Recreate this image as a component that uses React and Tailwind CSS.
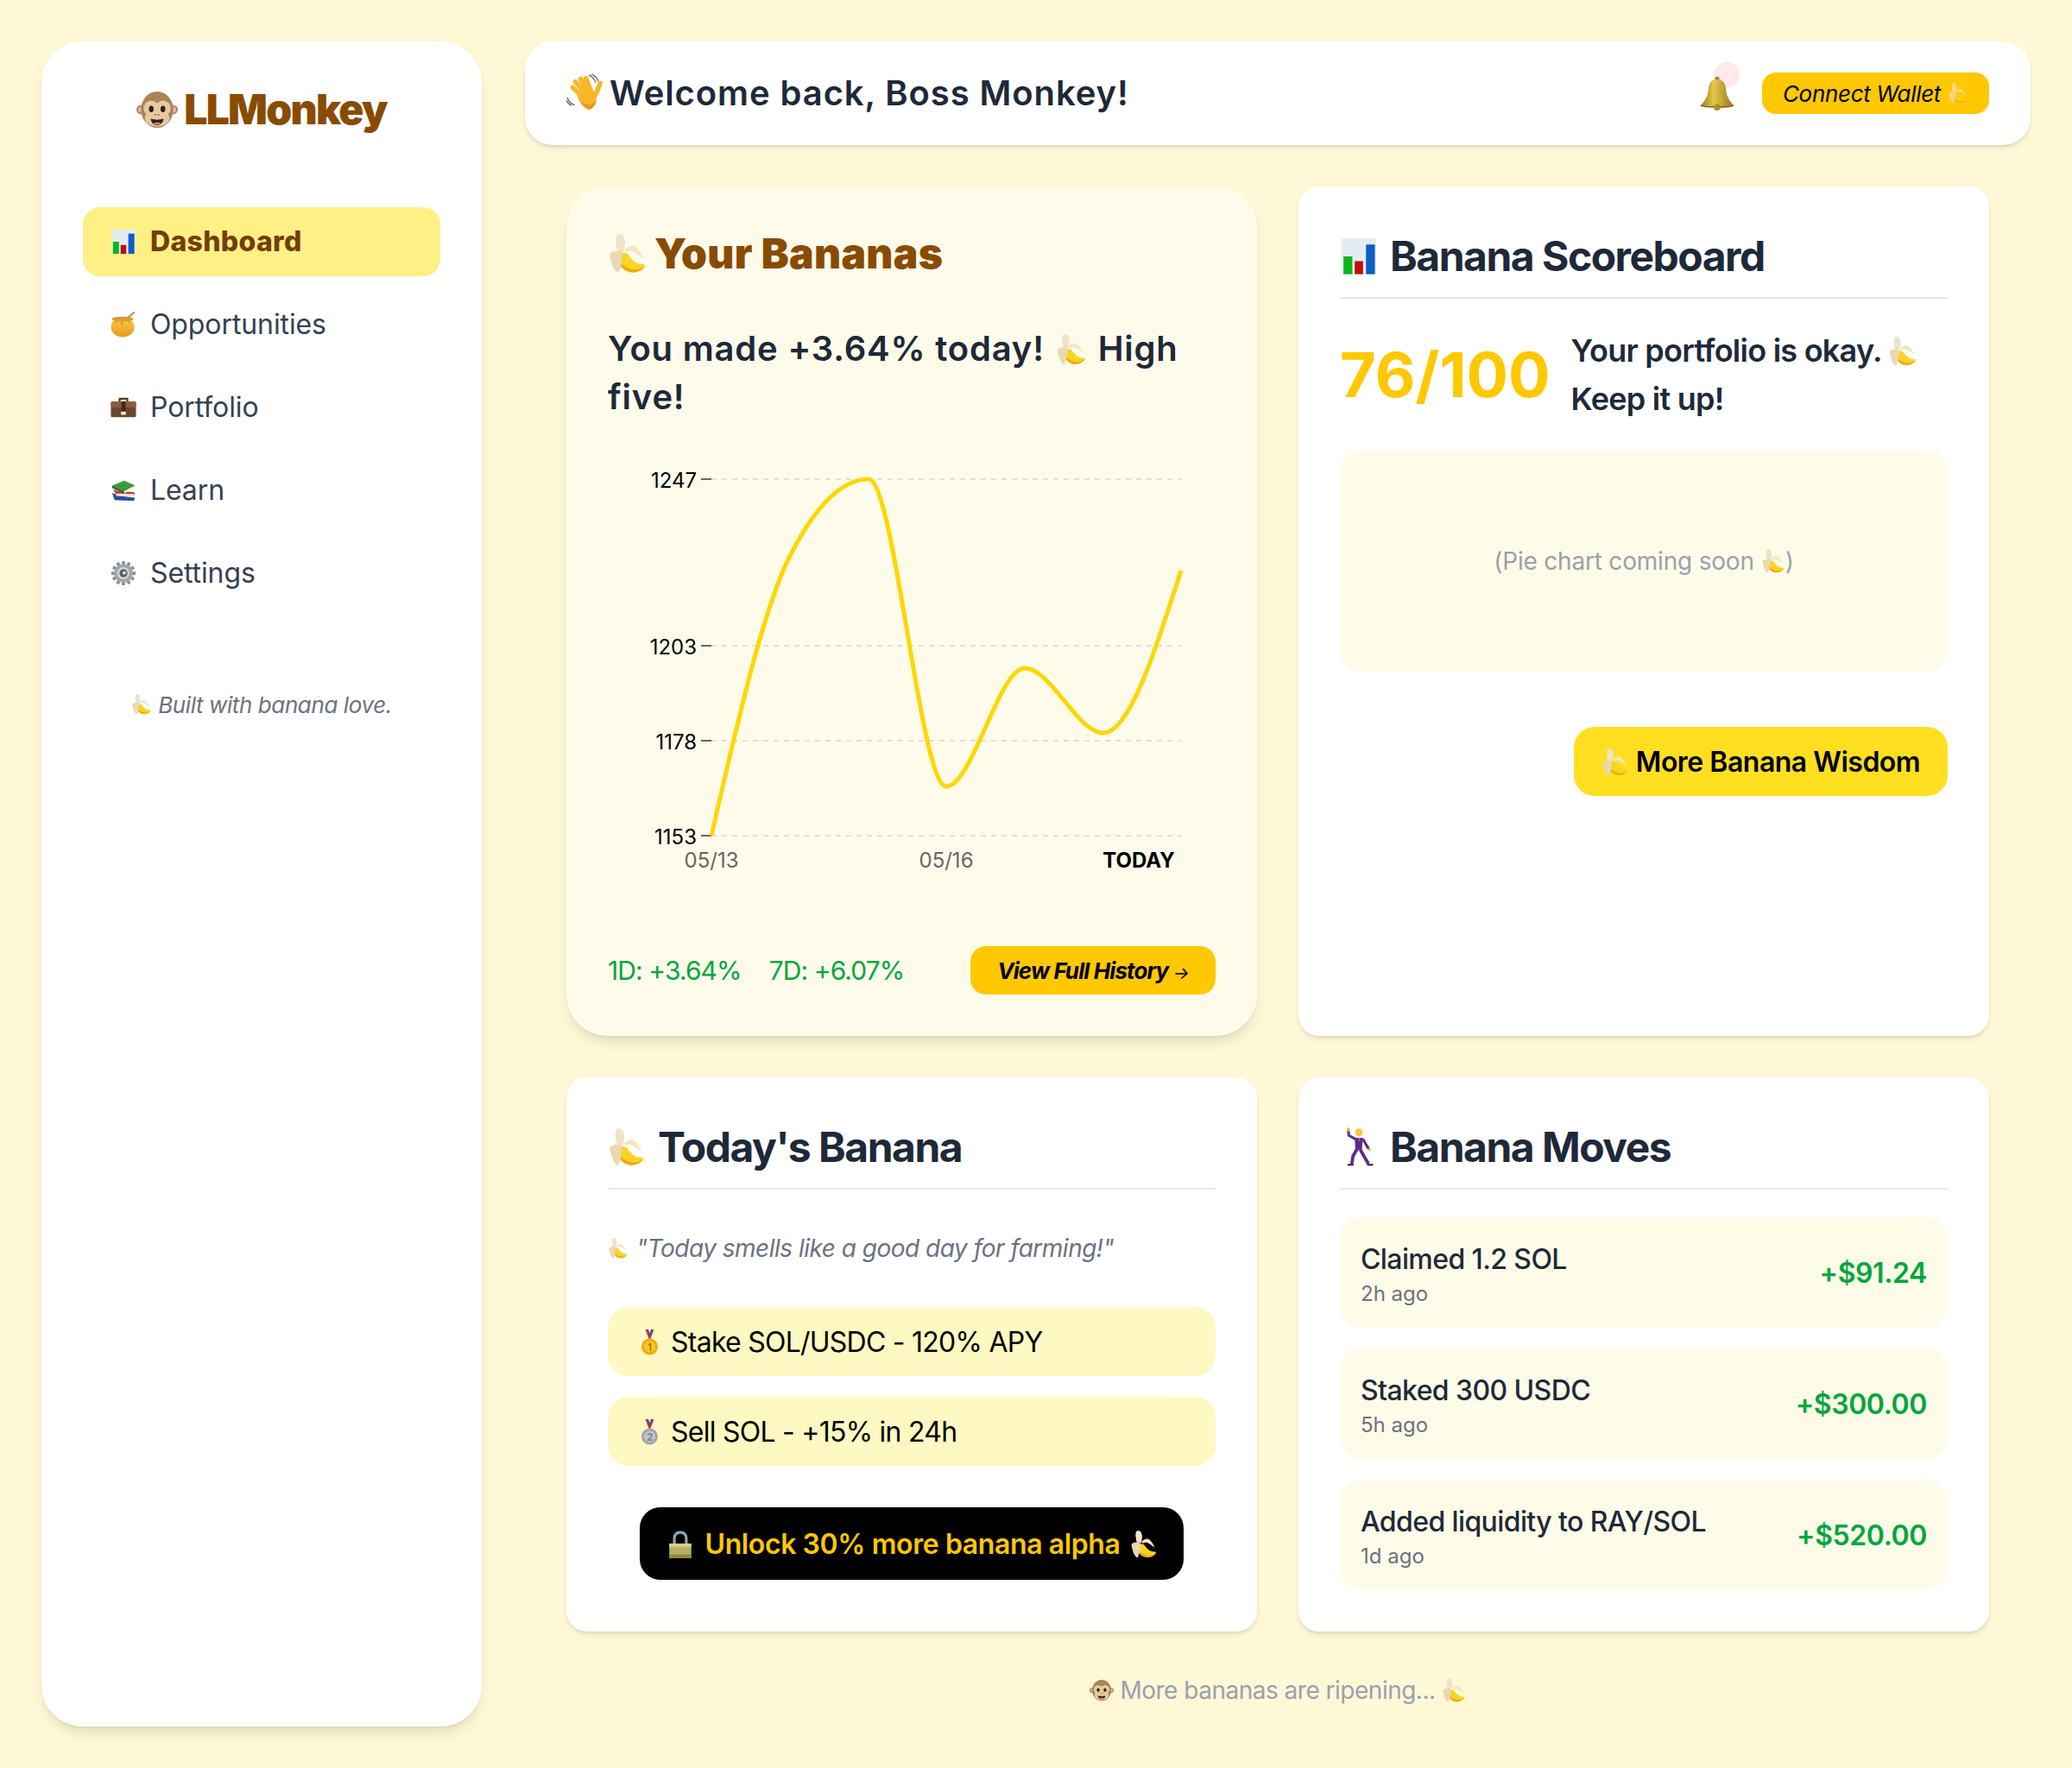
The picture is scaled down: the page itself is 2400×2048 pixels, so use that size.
import React from "react";

/* inline drawings for the emoji in the picture */
const Banana = ({ className }) => (
  <svg viewBox="0 0 64 64" className={className}>
    <path d="M18 0C13 1 12 8 13 14C14 20 14 23 15 26L26 29C27 22 29 14 27 8C26 3 22 0 18 0z" fill="#efe3c9" />
    <path d="M24 30C20 36 17 41 18 46C20 54 30 62 40 62C48 62 56 58 60 52L59 49C52 50 44 47 39 41C36 38 33 34 32 32z" fill="#fbd321" />
    <path d="M18 46C20 54 30 62 40 62C48 62 56 58 60 52C54 57 44 59 36 56C28 53 22 49 18 46z" fill="#eda915" />
    <path d="M3.5 31C8 28 16 26 22 27C24 30 24 36 23 42C22 50 20 58 17 63C13 61 9 56 7 49C5 42 3 36 3.5 31z" fill="#ead8b2" />
    <path d="M27 25C32 20 38 18 42 19C48 23 54 31 57 39C52 36 46 31 40 28C36 27 32 28 29 30z" fill="#f4e6c4" />
  </svg>
);

const Monkey = ({ className }) => (
  <svg viewBox="0 0 64 56" className={className}>
    <circle cx="7" cy="28" r="7" fill="#a8845b" />
    <circle cx="57" cy="28" r="7" fill="#a8845b" />
    <circle cx="7" cy="28" r="4.5" fill="#edb0ae" />
    <circle cx="57" cy="28" r="4.5" fill="#edb0ae" />
    <ellipse cx="32" cy="28" rx="25" ry="28" fill="#a8845b" />
    <circle cx="23" cy="26" r="12" fill="#e6c99e" />
    <circle cx="41" cy="26" r="12" fill="#e6c99e" />
    <ellipse cx="32" cy="41" rx="19" ry="13" fill="#e6c99e" />
    <ellipse cx="23" cy="27" rx="3.6" ry="5" fill="#2b1f18" />
    <ellipse cx="41" cy="27" rx="3.6" ry="5" fill="#2b1f18" />
    <circle cx="29.5" cy="36" r="1.2" fill="#7a5a3a" />
    <circle cx="34.5" cy="36" r="1.2" fill="#7a5a3a" />
    <path d="M22 42c6 2 14 2 20 0-1 7-6 10-10 10s-9-3-10-10z" fill="#3a1e14" />
    <path d="M26 49c3-2 9-2 12 0-3 3-9 3-12 0z" fill="#e07f78" />
  </svg>
);

const BarChart = ({ className }) => (
  <svg viewBox="0 0 64 64" className={className}>
    <rect x="3" y="2" width="58" height="60" fill="#e3ecf3" />
    <rect x="6" y="32" width="15" height="30" fill="#0cb51f" />
    <rect x="25" y="40" width="14" height="22" fill="#c40d0d" />
    <rect x="44" y="12" width="15" height="50" fill="#0b5fc4" />
  </svg>
);

const Honey = ({ className }) => (
  <svg viewBox="0 0 64 64" className={className}>
    <defs>
      <linearGradient id="honey-pot" x1="0" x2="0" y1="0" y2="1">
        <stop offset="0" stopColor="#fbd055" />
        <stop offset="1" stopColor="#e09a18" />
      </linearGradient>
    </defs>
    <path d="M40 18L58 2" stroke="#c29a6e" strokeWidth="5" strokeLinecap="round" />
    <ellipse cx="30" cy="38" rx="29" ry="25" fill="url(#honey-pot)" />
    <ellipse cx="30" cy="18" rx="27" ry="6" fill="#dc9a30" />
    <path d="M3 19c3 4 7 5 9 4 1 8 4 8 5 1 4 1 6 1 8 0 1 11 5 11 6 1 5 0 9 0 12-1 1 6 4 6 5 0 4-1 7-3 9-5-4 8-50 8-54 0z" fill="#e8890f" />
  </svg>
);

const Briefcase = ({ className }) => (
  <svg viewBox="0 0 64 64" className={className}>
    <path d="M20 18v-7c0-2 2-3 3-3h18c2 0 3 1 3 3v7h-5v-5H25v5z" fill="#5b3a24" />
    <rect x="1" y="17" width="62" height="39" rx="4" fill="#6d4530" />
    <rect x="1" y="17" width="62" height="15" rx="4" fill="#8a5a3f" />
    <rect x="27" y="17" width="10" height="27" fill="#43281a" />
    <rect x="26" y="42" width="12" height="8" rx="1" fill="#f1ece6" />
  </svg>
);

const Books = ({ className }) => (
  <svg viewBox="0 0 64 64" className={className}>
    <path d="M4 38l6 18 48 2 2-8-40-4z" fill="#2a4c9c" />
    <path d="M7 30l8 16 44-1v-9L20 34z" fill="#d13a33" />
    <path d="M14 40l44 1v4l-44 1z" fill="#f5efe4" />
    <path d="M4 20L34 8l27 12-27 14z" fill="#3c9b3f" />
    <path d="M4 20l30 14v6L4 26z" fill="#256b2a" />
    <path d="M34 34l27-14v4L34 40z" fill="#f1eee3" />
  </svg>
);

const Gear = ({ className }) => (
  <svg viewBox="0 0 64 64" className={className}>
    <g fill="#8b8f96">
      {[0, 30, 60, 90, 120, 150].map((a) => (
        <rect key={a} x="28" y="2" width="8" height="60" rx="1" transform={`rotate(${a} 32 32)`} />
      ))}
    </g>
    <circle cx="32" cy="32" r="23" fill="#a2a6ac" />
    <circle cx="32" cy="32" r="15" fill="#d6d8db" />
    <circle cx="32" cy="32" r="10" fill="#5d6168" />
    <circle cx="34" cy="31" r="4" fill="#e9eaec" />
  </svg>
);

const Wave = ({ className }) => (
  <svg viewBox="-6 -4 72 72" className={className}>
    <g stroke="#f9b62a" strokeWidth="9" strokeLinecap="round" fill="none">
      <path d="M24 38L6 21" />
      <path d="M28 30L11 10" />
      <path d="M34 27L21 5" />
      <path d="M40 26L31 4" />
      <path d="M42 44L52 30L58 13" />
    </g>
    <path d="M14 32C20 20 44 20 50 32C54 46 46 62 36 63C26 60 16 48 14 32z" fill="#f9b62a" />
    <path d="M20 46C25 54 30 60 37 63C44 62 50 54 52 44C46 56 32 56 20 46z" fill="#e8981a" />
    <path d="M37 -2C43 0 47 4 49 11M41 -4C47 -2 52 3 54 8M-4 41C-2 47 3 52 9 54M-6 46C-4 50 -1 53 3 55" stroke="#555" strokeWidth="2" fill="none" strokeLinecap="round" />
  </svg>
);

const Bell = ({ className }) => (
  <svg viewBox="0 0 64 64" className={className}>
    <defs>
      <linearGradient id="bell-gold" x1="0" x2="1" y1="0" y2="0">
        <stop offset="0" stopColor="#a07a1c" />
        <stop offset="0.4" stopColor="#e6c74e" />
        <stop offset="1" stopColor="#9a7414" />
      </linearGradient>
    </defs>
    <circle cx="32" cy="5" r="4" fill="#a07a1c" />
    <path d="M32 6c-10 0-15 7-16 17-1 14-6 22-14 31 10 3 50 3 60 0-8-9-13-17-14-31-1-10-6-17-16-17z" fill="url(#bell-gold)" />
    <path d="M2 54c10 3 50 3 60 0l1 2c-12 4-50 4-62 0z" fill="#7a5a10" />
    <circle cx="32" cy="58" r="6" fill="#b58a1e" />
  </svg>
);

const Lock = ({ className }) => (
  <svg viewBox="0 0 64 64" className={className}>
    <path d="M16 32V20C16 8 23 3 32 3s16 5 16 17v12h-6V20c0-8-4-11-10-11s-10 3-10 11v12z" fill="#8fa3ad" />
    <rect x="8" y="30" width="48" height="32" rx="3" fill="#b9ad62" />
    <rect x="8" y="30" width="48" height="8" fill="#d6cc88" />
    <rect x="8" y="54" width="48" height="8" fill="#93883f" />
  </svg>
);

const Medal = ({ className, place }) => (
  <svg viewBox="0 0 40 64" className={className}>
    <path d="M10 2l8 22h4L30 2h-5l-5 14-5-14z" fill="#d83b3b" />
    <path d="M14 2l6 18 6-18h-3l-3 9-3-9z" fill="#2a4aa8" />
    <circle cx="20" cy="42" r="19" fill={place === 1 ? "#f0ad0c" : "#a4a7ab"} />
    <circle cx="20" cy="42" r="13" fill={place === 1 ? "#fbc92c" : "#c3c5c8"} />
    <text x="20" y="51" textAnchor="middle" fontSize="24" fontWeight="700" fontFamily="Inter, sans-serif" fill={place === 1 ? "#b87a06" : "#808387"}>
      {place}
    </text>
  </svg>
);

const Dancer = ({ className }) => (
  <svg viewBox="0 0 64 64" className={className}>
    <circle cx="32" cy="7" r="6.5" fill="#f6c933" />
    <path d="M14 1L15 12L26 18" stroke="#5f2c8a" strokeWidth="4.5" fill="none" strokeLinejoin="round" />
    <path d="M14 4V0" stroke="#f6c933" strokeWidth="3.5" strokeLinecap="round" />
    <path d="M25 16h14l-2 20H26z" fill="#5f2c8a" />
    <path d="M31 16h3l-1 8z" fill="#e0558a" />
    <path d="M39 18L45 29L49 35" stroke="#5f2c8a" strokeWidth="4.5" fill="none" strokeLinejoin="round" />
    <circle cx="50" cy="36" r="2.6" fill="#f6c933" />
    <path d="M29 35L22 47L20 60M34 35L40 46L48 60" stroke="#5f2c8a" strokeWidth="5.5" fill="none" strokeLinejoin="round" />
    <path d="M13 60h10v3H13zM46 60h10v3H46z" fill="#22222a" />
  </svg>
);

// same curve the chart library calls "monotone"
const monotonePath = (pts) => {
  const n = pts.length;
  const s = [];
  for (let i = 0; i < n - 1; i++) s.push((pts[i + 1][1] - pts[i][1]) / (pts[i + 1][0] - pts[i][0]));
  const t = new Array(n).fill(0);
  for (let i = 1; i < n - 1; i++) {
    const h0 = pts[i][0] - pts[i - 1][0];
    const h1 = pts[i + 1][0] - pts[i][0];
    const p = (s[i - 1] * h1 + s[i] * h0) / (h0 + h1);
    t[i] = (Math.sign(s[i - 1]) + Math.sign(s[i])) * Math.min(Math.abs(s[i - 1]), Math.abs(s[i]), 0.5 * Math.abs(p));
  }
  t[0] = (3 * s[0] - t[1]) / 2;
  t[n - 1] = (3 * s[n - 2] - t[n - 2]) / 2;
  let d = `M${pts[0][0]} ${pts[0][1]}`;
  for (let i = 0; i < n - 1; i++) {
    const dx = (pts[i + 1][0] - pts[i][0]) / 3;
    d += `C${pts[i][0] + dx} ${pts[i][1] + dx * t[i]} ${pts[i + 1][0] - dx} ${pts[i + 1][1] - dx * t[i + 1]} ${pts[i + 1][0]} ${pts[i + 1][1]}`;
  }
  return d;
};

const chartPoints = [
  [824, 968],
  [915, 644],
  [1006, 555],
  [1096, 911],
  [1187, 774],
  [1278, 849],
  [1368, 661],
];

const yTicks = [
  { label: "1247", y: 555 },
  { label: "1203", y: 748 },
  { label: "1178", y: 858 },
  { label: "1153", y: 968 },
];

const BananaChart = () => (
  <svg viewBox="704 530 704 490" className="mt-[42px] h-[490px] w-[704px]" fontFamily="Inter, sans-serif" fontSize="24">
    {yTicks.map((t) => (
      <g key={t.label}>
        <line x1="824" x2="1368" y1={t.y} y2={t.y} stroke="#e0e0dc" strokeWidth="2" strokeDasharray="6 6" />
        <line x1="812" x2="824" y1={t.y} y2={t.y} stroke="#666" strokeWidth="2" />
        <text x="807" y={t.y + 10} textAnchor="end" fill="#000">
          {t.label}
        </text>
      </g>
    ))}
    <path d={monotonePath(chartPoints)} fill="none" stroke="#ffd600" strokeWidth="5" />
    <text x="824" y="1005" textAnchor="middle" fill="#666">05/13</text>
    <text x="1096" y="1005" textAnchor="middle" fill="#666">05/16</text>
    <text x="1319" y="1005" textAnchor="middle" fill="#000" fontWeight="700">TODAY</text>
  </svg>
);

const navItems = [
  { label: "Dashboard", Icon: BarChart, active: true },
  { label: "Opportunities", Icon: Honey },
  { label: "Portfolio", Icon: Briefcase },
  { label: "Learn", Icon: Books },
  { label: "Settings", Icon: Gear },
];

const moves = [
  { title: "Claimed 1.2 SOL", time: "2h ago", amount: "+$91.24" },
  { title: "Staked 300 USDC", time: "5h ago", amount: "+$300.00" },
  { title: "Added liquidity to RAY/SOL", time: "1d ago", amount: "+$520.00" },
];

const CardTitle = ({ Icon, iconClass, children }) => (
  <h2 className="mb-[14px] flex h-[66px] items-center gap-[14px] text-[48px] leading-none font-bold tracking-[-1.5px] text-gray-800">
    <Icon className={iconClass} />
    {children}
  </h2>
);

export default function App() {
  return (
    <div className="flex min-h-[2048px] items-start gap-[50px] bg-[#fff8d6] p-12 font-['Inter',sans-serif]">
      {/* Sidebar */}
      <aside className="h-[1952px] w-[510px] shrink-0 rounded-[48px] bg-white p-12 shadow-lg">
        <div className="mb-[82px] flex h-[62px] items-center justify-center gap-[7px]">
          <Monkey className="h-[42px] w-[48px]" />
          <span className="text-[48px] font-black tracking-[-1.7px] text-yellow-800">LLMonkey</span>
        </div>
        <nav className="flex flex-col gap-4">
          {navItems.map(({ label, Icon, active }) => (
            <div
              key={label}
              className={
                active
                  ? "flex h-20 items-center gap-4 rounded-[20px] bg-yellow-200 px-8 text-[32px] font-extrabold tracking-[0.3px] text-yellow-900"
                  : "flex h-20 items-center gap-4 rounded-[20px] px-8 text-[32px] tracking-[-0.1px] text-gray-700"
              }
            >
              <Icon className="h-[30px] w-[30px]" />
              {label}
            </div>
          ))}
        </nav>
        <div className="mt-[92px] flex h-10 items-center justify-center gap-[7px] text-[26px] tracking-[-0.4px] text-gray-500 italic">
          <Banana className="h-[24px] w-[24px]" />
          Built with banana love.
        </div>
      </aside>

      {/* Main */}
      <main className="min-w-0 flex-1">
        <header className="flex h-[120px] items-center justify-between rounded-[32px] bg-white px-12 shadow-md">
          <div className="flex items-center gap-[6px] text-[40px] font-semibold tracking-[0.9px] text-gray-800">
            <Wave className="h-[44px] w-[44px]" />
            Welcome back, Boss Monkey!
          </div>
          <div className="flex items-center gap-8">
            <div className="relative">
              <span className="absolute top-[-16px] left-[16px] h-[30px] w-[30px] rounded-full bg-red-500/10" />
              <Bell className="relative h-[40px] w-[40px]" />
            </div>
            <button className="flex h-12 w-[263px] items-center justify-center gap-2 rounded-2xl bg-[#ffc800] text-[26px] tracking-[-0.3px] text-black italic">
              Connect Wallet
              <Banana className="h-[26px] w-[24px] opacity-70" />
            </button>
          </div>
        </header>

        <div className="px-12 pt-12">
          <div className="grid grid-cols-2 grid-rows-[984px_642px] gap-12">
            {/* Your Bananas */}
            <section className="flex flex-col rounded-[48px] bg-[#fffbeb] p-12 shadow-lg">
              <div className="flex h-[60px] items-center gap-2 text-[48px] font-black tracking-[0.3px] text-yellow-800">
                <Banana className="h-[46px] w-[46px]" />
                Your Bananas
              </div>
              <p className="mt-[52px] text-[40px] leading-[56px] font-semibold tracking-[0.8px] text-gray-800">
                You made +3.64% today! <Banana className="mx-[2px] inline h-[38px] w-[36px] align-[-6px]" /> High five!
              </p>
              <BananaChart />
              <div className="mt-auto flex items-center justify-between">
                <div className="flex gap-8 text-[30px] tracking-[-0.9px] text-green-600">
                  <span>1D: +3.64%</span>
                  <span>7D: +6.07%</span>
                </div>
                <button className="h-14 w-[284px] rounded-[18px] bg-[#ffc800] text-[26px] font-bold tracking-[-0.9px] text-black italic">
                  View Full History <span className="text-[20px] font-normal">→</span>
                </button>
              </div>
            </section>

            {/* Scoreboard */}
            <section className="flex flex-col rounded-3xl bg-white p-12 shadow-md">
              <div className="border-b-2 border-gray-200">
                <CardTitle Icon={BarChart} iconClass="h-[46px] w-[44px]">
                  Banana Scoreboard
                </CardTitle>
              </div>
              <div className="mt-[32px] flex items-center gap-[24px]">
                <span className="text-[72px] leading-none font-bold text-[#ffc800]">76/100</span>
                <p className="text-[36px] leading-[56px] font-semibold tracking-[-0.75px] text-gray-800">
                  Your portfolio is okay. <Banana className="inline h-[36px] w-[34px] align-[-6px]" />
                  <br />
                  Keep it up!
                </p>
              </div>
              <div className="mt-[32px] flex h-[256px] items-center justify-center gap-2 rounded-3xl bg-yellow-50 text-[28px] tracking-[-0.2px] text-gray-400">
                (Pie chart coming soon
                <span className="flex items-center">
                  <Banana className="h-[30px] w-[28px]" />)
                </span>
              </div>
              <button className="mt-16 flex h-20 w-[433px] items-center justify-center gap-[8px] self-end rounded-3xl bg-yellow-300 pt-[2px] text-[32px] font-semibold tracking-[-0.5px] text-black">
                <Banana className="h-[34px] w-[32px]" />
                More Banana Wisdom
              </button>
            </section>

            {/* Today's Banana */}
            <section className="flex flex-col rounded-3xl bg-white p-12 shadow-md">
              <div className="border-b-2 border-gray-200">
                <CardTitle Icon={Banana} iconClass="h-[46px] w-[44px]">
                  Today's Banana
                </CardTitle>
              </div>
              <div className="mt-12 flex h-10 items-center gap-[9px] text-[28px] tracking-[-0.5px] text-gray-500 italic">
                <Banana className="h-[24px] w-[24px]" />
                "Today smells like a good day for farming!"
              </div>
              <div className="mt-12 flex flex-col gap-6">
                <div className="flex h-20 items-center gap-[14px] rounded-3xl bg-yellow-100 px-[38px] pt-[2px] text-[32px] tracking-[-0.75px] text-black">
                  <Medal place={1} className="h-[32px] w-[21px]" />
                  Stake SOL/USDC - 120% APY
                </div>
                <div className="flex h-20 items-center gap-[14px] rounded-3xl bg-yellow-100 px-[38px] pt-[2px] text-[32px] tracking-[-0.75px] text-black">
                  <Medal place={2} className="h-[32px] w-[21px]" />
                  Sell SOL - +15% in 24h
                </div>
              </div>
              <button className="mt-12 flex h-[84px] w-[630px] items-center justify-center gap-[12px] self-center rounded-3xl bg-black pt-[2px] text-[32px] font-semibold tracking-[-0.4px] text-[#ffc800]">
                <Lock className="h-[34px] w-[34px]" />
                Unlock 30% more banana alpha
                <Banana className="h-[34px] w-[32px]" />
              </button>
            </section>

            {/* Banana Moves */}
            <section className="flex flex-col rounded-3xl bg-white p-12 shadow-md">
              <div className="border-b-2 border-gray-200">
                <CardTitle Icon={Dancer} iconClass="h-[46px] w-[44px]">
                  Banana Moves
                </CardTitle>
              </div>
              <div className="mt-8 flex flex-col gap-6">
                {moves.map((m) => (
                  <div key={m.title} className="flex h-32 items-center justify-between rounded-3xl bg-yellow-50 px-6 pt-[2px]">
                    <div>
                      <p className="text-[32px] leading-[48px] font-medium tracking-[-0.6px] text-gray-800">{m.title}</p>
                      <p className="text-[24px] leading-[32px] text-gray-500">{m.time}</p>
                    </div>
                    <span className="text-[32px] font-semibold tracking-[-0.4px] text-green-600">{m.amount}</span>
                  </div>
                ))}
              </div>
            </section>
          </div>

          <div className="mt-[48px] flex h-10 items-center justify-center gap-[7px] text-[28px] tracking-[-0.5px] text-gray-400">
            <Monkey className="h-[26px] w-[28px]" />
            More bananas are ripening...
            <Banana className="h-[28px] w-[28px]" />
          </div>
        </div>
      </main>
    </div>
  );
}
